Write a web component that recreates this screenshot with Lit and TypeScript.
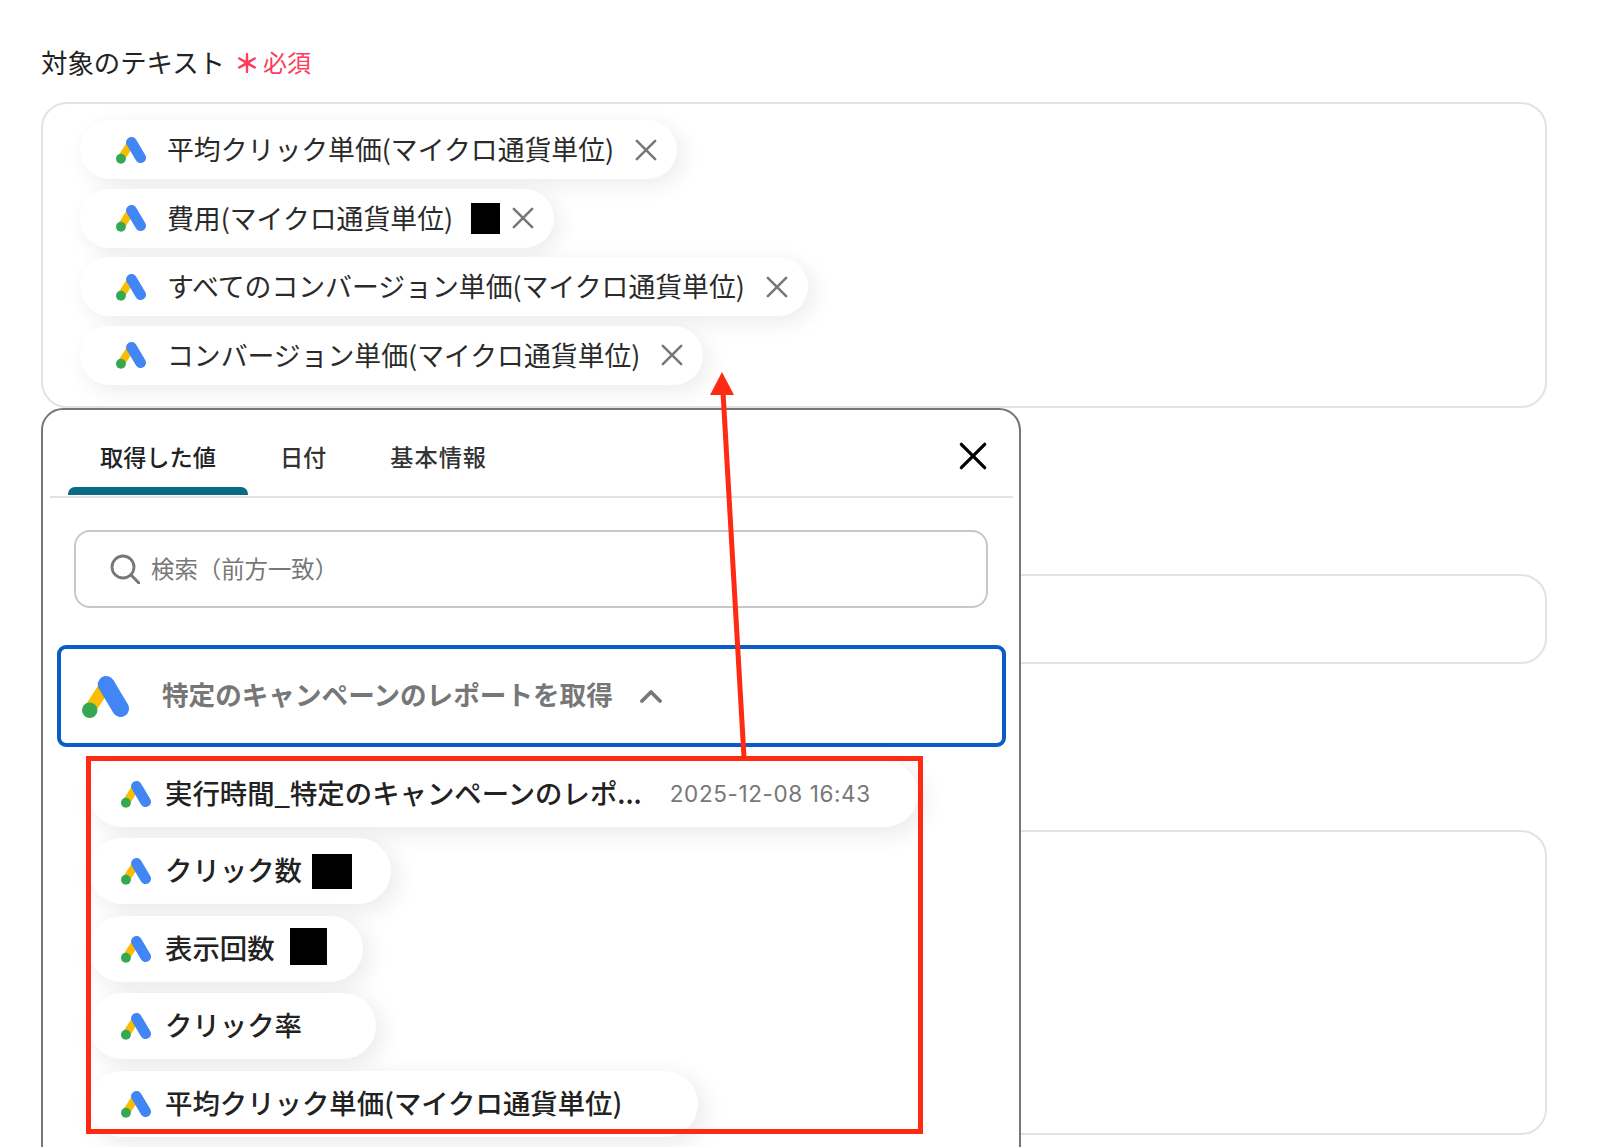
import { LitElement, html, css, svg } from "lit";
import { customElement } from "lit/decorators.js";

const adsLogo = (cls: string) => html`<svg class=${cls} viewBox="0 0 140 128" aria-hidden="true">
  ${svg`<line x1="22" y1="105" x2="72" y2="28" stroke="#fbbc04" stroke-width="36"/>
  <line x1="72" y1="28" x2="115" y2="100" stroke="#4285f4" stroke-width="50" stroke-linecap="round"/>
  <circle cx="23" cy="105" r="23" fill="#34a853"/>`}
</svg>`;

const cross = (cls: string) => html`<svg class=${cls} viewBox="0 0 24 24" aria-hidden="true">
  ${svg`<path d="M2 2 22 22M22 2 2 22" fill="none" stroke="currentColor" stroke-width="2.8" stroke-linecap="round"/>`}
</svg>`;

interface TagItem { text: string; mask?: string }
interface ListItem { text: string; mask?: string; date?: string; width: string }

const tags: TagItem[] = [
  { text: "平均クリック単価(マイクロ通貨単位)" },
  { text: "費用(マイクロ通貨単位)", mask: "mask-tag" },
  { text: "すべてのコンバージョン単価(マイクロ通貨単位)" },
  { text: "コンバージョン単価(マイクロ通貨単位)" },
];

const rows: ListItem[] = [
  { text: "実行時間_特定のキャンペーンのレポ...", date: "2025-12-08 16:43", width: "w1" },
  { text: "クリック数", mask: "mask-a", width: "w2" },
  { text: "表示回数", mask: "mask-b", width: "w3" },
  { text: "クリック率", width: "w4" },
  { text: "平均クリック単価(マイクロ通貨単位)", width: "w5" },
];

@customElement("app-root")
export class AppRoot extends LitElement {
  static styles = css`
    :host {
      display: block;
      position: relative;
      height: 1147px;
      overflow: hidden;
      background: #fff;
      color: #222;
      font-family: "Noto Sans CJK JP", "Noto Sans", sans-serif;
    }
    .page { display: flex; flex-direction: column; padding: 0 53px 0 41px; }
    .label {
      display: flex; align-items: center; gap: 9px;
      height: 40px; margin-top: 42px; margin-bottom: 20px;
      font-size: 26.4px; line-height: 40px; color: #222;
    }
    .required { display: flex; align-items: center; gap: 3px; color: #ff3b5c; font-size: 24px; }
    .star { font-size: 26px; line-height: 40px; height: 40px; font-weight: 700; }
    .field {
      box-sizing: border-box;
      border: 2px solid #e2e2ea;
      border-radius: 26px;
      background: #fff;
    }
    .f1 { height: 306px; padding: 16px 0 0 37px; display: flex; flex-direction: column; align-items: flex-start; gap: 9.5px; }
    .f2 { height: 90px; margin-top: 166px; }
    .f3 { height: 305px; margin-top: 166px; }

    .tag {
      box-sizing: border-box; height: 59px; border-radius: 30px; background: #fff;
      display: flex; align-items: center; padding: 0 20px 0 36px;
      box-shadow: 6px 6px 22px rgba(0, 0, 0, 0.08);
      font-size: 26.85px; color: #2a2a2a; white-space: nowrap;
    }
    .tag-text { margin-top: -2px; }
    .logo-s { width: 30px; height: 28px; flex: none; margin-right: 21px; }
    .tag-x { width: 22px; height: 22px; flex: none; margin-left: 21px; color: #777; }
    .mask-tag { width: 29px; height: 31px; background: #000; margin-left: 18px; margin-right: -9px; flex: none; }

    .popup {
      position: absolute; left: 41px; top: 408px; width: 980px; height: 800px;
      box-sizing: border-box; background: #fff;
      border: 2px solid #777; border-radius: 22px;
      padding: 0 6px 0 7px;
    }
    .tabs {
      display: flex; align-items: stretch; height: 88px; box-sizing: border-box;
      border-bottom: 2px solid #e2e2e2; padding: 0 26px 1px 18px;
    }
    .tab {
      display: flex; flex-direction: column; padding: 0 32px;
      font-size: 23.2px; font-weight: 500; color: #333;
    }
    .tab-text { flex: 1; display: flex; align-items: center; padding-top: 15px; white-space: nowrap; }
    .tab.active { color: #222; }
    .tab.wide { letter-spacing: 1px; }
    .tab-bar { height: 8px; border-radius: 7px 7px 0 0; background: transparent; margin: 0 -32px; }
    .tab.active .tab-bar { background: #0a6b85; }
    .popup-x { width: 28px; height: 28px; margin: 32px 0 0 auto; color: #000; flex: none; }

    .search {
      box-sizing: border-box; height: 78px; margin: 32px 25px 0 24px;
      border: 2px solid #c8c8c8; border-radius: 16px;
      display: flex; align-items: center; gap: 11px; padding: 0 0 0 34px;
      font-size: 23.4px; color: #777;
    }
    .search-text { margin-top: -2px; }
    .search-icon { width: 30px; height: 30px; flex: none; color: #777; }

    .group {
      box-sizing: border-box; height: 102px; margin: 37px 7px 0 7px;
      border: 4px solid #0a5cc8; border-radius: 9px;
      display: flex; align-items: center; padding-left: 21px;
      font-size: 26.6px; font-weight: 700; color: #777;
    }
    .group-text { margin-top: -5px; }
    .logo-l { width: 47px; height: 43px; flex: none; margin-right: 33px; }
    .chev { width: 22px; height: 14px; flex: none; margin-left: 27px; color: #777; }

    .list { display: flex; flex-direction: column; align-items: flex-start; gap: 11.4px; margin: 14px 0 0 39px; }
    .row {
      box-sizing: border-box; height: 66px; border-radius: 33px; background: #fff;
      display: flex; align-items: center; padding-left: 32px;
      box-shadow: 6px 6px 24px rgba(0, 0, 0, 0.09);
      font-size: 27.4px; font-weight: 500; color: #222; white-space: nowrap;
    }
    .row-text { margin-top: -4px; }
    .row .logo-s { margin-right: 14px; }
    .w1 { width: 829px; }
    .w2 { width: 302px; }
    .w3 { width: 274px; }
    .w4 { width: 287px; }
    .w5 { width: 609px; }
    .date { margin-left: 28px; margin-top: -2px; font-family: "Inter", sans-serif; font-size: 22.5px; font-weight: 400; color: #777; letter-spacing: 0.6px; }
    .mask-a { width: 40px; height: 35px; background: #000; margin-left: 10px; flex: none; }
    .mask-b { width: 37px; height: 37px; background: #000; margin: -4px 0 0 15px; flex: none; }

    .marks { position: absolute; left: 0; top: 0; width: 1600px; height: 1147px; pointer-events: none; }
  `;

  render() {
    return html`
      <div class="page">
        <div class="label">
          <span>対象のテキスト</span>
          <span class="required"><span class="star">＊</span><span>必須</span></span>
        </div>
        <div class="field f1">
          ${tags.map(t => html`<div class="tag">
            ${adsLogo("logo-s")}
            <span class="tag-text">${t.text}</span>
            ${t.mask ? html`<span class=${t.mask}></span>` : ""}
            ${cross("tag-x")}
          </div>`)}
        </div>
        <div class="field f2"></div>
        <div class="field f3"></div>
      </div>

      <div class="popup">
        <div class="tabs">
          <div class="tab active"><span class="tab-text">取得した値</span><span class="tab-bar"></span></div>
          <div class="tab"><span class="tab-text">日付</span><span class="tab-bar"></span></div>
          <div class="tab wide"><span class="tab-text">基本情報</span><span class="tab-bar"></span></div>
          ${cross("popup-x")}
        </div>
        <div class="search">
          <svg class="search-icon" viewBox="0 0 30 30" aria-hidden="true">
            ${svg`<circle cx="13" cy="13" r="11" fill="none" stroke="currentColor" stroke-width="2.8"/>
            <path d="M21 21 29 29" stroke="currentColor" stroke-width="3" stroke-linecap="round"/>`}
          </svg>
          <span class="search-text">検索（前方一致）</span>
        </div>
        <div class="group">
          ${adsLogo("logo-l")}
          <span class="group-text">特定のキャンペーンのレポートを取得</span>
          <svg class="chev" viewBox="0 0 22 14" aria-hidden="true">
            ${svg`<path d="M2 12 11 3 20 12" fill="none" stroke="currentColor" stroke-width="3.8" stroke-linecap="round" stroke-linejoin="round"/>`}
          </svg>
        </div>
        <div class="list">
          ${rows.map(r => html`<div class="row ${r.width}">
            ${adsLogo("logo-s")}
            <span class="row-text">${r.text}</span>
            ${r.mask ? html`<span class=${r.mask}></span>` : ""}
            ${r.date ? html`<span class="date">${r.date}</span>` : ""}
          </div>`)}
        </div>
      </div>

      <svg class="marks" viewBox="0 0 1600 1147" aria-hidden="true">
        ${svg`<rect x="88.5" y="758.5" width="832" height="373" fill="none" stroke="#ff2a12" stroke-width="5"/>
        <line x1="723" y1="392" x2="744" y2="757" stroke="#ff2a12" stroke-width="5"/>
        <polygon points="722,372 710,395 734,395" fill="#ff2a12"/>`}
      </svg>
    `;
  }
}
